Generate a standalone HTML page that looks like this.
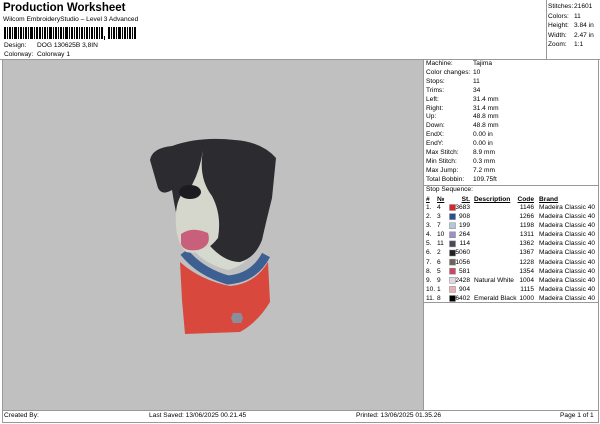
<!DOCTYPE html>
<html><head><meta charset="utf-8"><style>
*{margin:0;padding:0;box-sizing:border-box}
body{width:600px;height:424px;background:#fff;font-family:"Liberation Sans",sans-serif;color:#000;position:relative;overflow:hidden;font-size:6.6px}
.a{position:absolute;white-space:nowrap;line-height:8px}
.t .a{line-height:9.1px}
</style></head><body>
<div class="a" style="left:3px;top:2px;font-size:11.5px;font-weight:bold;line-height:13px">Production Worksheet</div>
<div class="a" style="left:3px;top:16px;font-size:6.6px">Wilcom EmbroideryStudio – Level 3 Advanced</div>
<svg class="a" style="left:4px;top:27px" width="140" height="14">
<g fill="#000">
<rect x="0" y="0" width="2" height="12"/><rect x="3" y="0" width="1" height="12"/><rect x="5" y="0" width="2" height="12"/><rect x="8" y="0" width="1" height="12"/><rect x="10" y="0" width="3" height="12"/><rect x="14" y="0" width="1" height="12"/><rect x="16" y="0" width="2" height="12"/><rect x="19" y="0" width="1" height="12"/><rect x="21" y="0" width="2" height="12"/><rect x="24" y="0" width="1" height="12"/><rect x="26" y="0" width="3" height="12"/><rect x="30" y="0" width="1" height="12"/><rect x="32" y="0" width="2" height="12"/><rect x="35" y="0" width="2" height="12"/><rect x="38" y="0" width="1" height="12"/><rect x="40" y="0" width="2" height="12"/><rect x="43" y="0" width="1" height="12"/><rect x="45" y="0" width="3" height="12"/><rect x="49" y="0" width="1" height="12"/><rect x="51" y="0" width="2" height="12"/><rect x="54" y="0" width="1" height="12"/><rect x="56" y="0" width="2" height="12"/><rect x="59" y="0" width="1" height="12"/><rect x="61" y="0" width="3" height="12"/><rect x="65" y="0" width="1" height="12"/><rect x="67" y="0" width="2" height="12"/><rect x="70" y="0" width="1" height="12"/><rect x="72" y="0" width="2" height="12"/><rect x="75" y="0" width="1" height="12"/><rect x="77" y="0" width="2" height="12"/><rect x="80" y="0" width="1" height="12"/><rect x="82" y="0" width="2" height="12"/><rect x="85" y="0" width="1" height="12"/><rect x="87" y="0" width="2" height="12"/><rect x="90" y="0" width="1" height="12"/><rect x="92" y="0" width="2" height="12"/><rect x="95" y="0" width="1" height="12"/><rect x="97" y="0" width="2" height="12"/><rect x="100" y="9" width="1" height="4"/>
<rect x="104" y="0" width="2" height="12"/><rect x="107" y="0" width="1" height="12"/><rect x="109" y="0" width="2" height="12"/><rect x="112" y="0" width="1" height="12"/><rect x="114" y="0" width="3" height="12"/><rect x="118" y="0" width="1" height="12"/><rect x="120" y="0" width="2" height="12"/><rect x="123" y="0" width="1" height="12"/><rect x="125" y="0" width="2" height="12"/><rect x="128" y="0" width="1" height="12"/><rect x="130" y="0" width="2" height="12"/>
</g></svg>
<div class="a" style="left:4px;top:42px">Design:</div><div class="a" style="left:37px;top:42px">DOG 130625B 3,8IN</div>
<div class="a" style="left:4px;top:51px">Colorway:</div><div class="a" style="left:37px;top:51px">Colorway 1</div>
<div class="a" style="left:0;top:59px;width:600px;height:1px;background:#999"></div>
<div class="a" style="left:546px;top:0;width:1px;height:59px;background:#999"></div>
<div class="a" style="left:548px;top:2px;line-height:9.5px">Stitches:<br>Colors:<br>Height:<br>Width:<br>Zoom:</div>
<div class="a" style="left:574px;top:2px;line-height:9.5px">21601<br>11<br>3.84 in<br>2.47 in<br>1:1</div>
<div class="a" style="left:2px;top:60px;width:422px;height:350px;background:#c0c0c0;border-left:1px solid #999;border-right:1px solid #999"></div>
<div class="a" style="left:598px;top:59px;width:1px;height:352px;background:#999"></div>
<div class="a" style="left:426px;top:60px;line-height:8.9px">Machine:<br>Color changes:<br>Stops:<br>Trims:<br>Left:<br>Right:<br>Up:<br>Down:<br>EndX:<br>EndY:<br>Max Stitch:<br>Min Stitch:<br>Max Jump:<br>Total Bobbin:</div>
<div class="a" style="left:473px;top:60px;line-height:8.9px">Tajima<br>10<br>11<br>34<br>31.4 mm<br>31.4 mm<br>48.8 mm<br>48.8 mm<br>0.00 in<br>0.00 in<br>8.9 mm<br>0.3 mm<br>7.2 mm<br>109.75ft</div>
<div class="a" style="left:424px;top:185px;width:175px;height:1px;background:#999"></div>
<div class="a" style="left:426px;top:186px">Stop Sequence:</div>
<div class="a" style="left:424px;top:302px;width:175px;height:1px;background:#999"></div>
<div class="t" style="position:absolute;left:0;top:195px">
<div class="a" style="left:426px;font-weight:bold;text-decoration:underline">#</div>
<div class="a" style="left:437px;font-weight:bold;text-decoration:underline">№</div>
<div class="a" style="left:440px;width:30px;text-align:right;font-weight:bold;text-decoration:underline">St.</div>
<div class="a" style="left:474px;font-weight:bold;text-decoration:underline">Description</div>
<div class="a" style="left:500px;width:34px;text-align:right;font-weight:bold;text-decoration:underline">Code</div>
<div class="a" style="left:539px;font-weight:bold;text-decoration:underline">Brand</div>
</div>
<div class="t" style="position:absolute;left:0;top:203px">
<div class="a" style="left:426px">1.<br>2.<br>3.<br>4.<br>5.<br>6.<br>7.<br>8.<br>9.<br>10.<br>11.</div>
<div class="a" style="left:437px">4<br>3<br>7<br>10<br>11<br>2<br>6<br>5<br>9<br>1<br>8</div>
<div class="a" style="left:440px;width:30px;text-align:right">3683<br>908<br>199<br>264<br>114<br>5060<br>1056<br>581<br>2428<br>904<br>6402</div>
<div class="a" style="left:474px"><br><br><br><br><br><br><br><br>Natural White<br><br>Emerald Black</div>
<div class="a" style="left:500px;width:34px;text-align:right">1146<br>1266<br>1198<br>1311<br>1362<br>1367<br>1228<br>1354<br>1004<br>1115<br>1000</div>
<div class="a" style="left:539px">Madeira Classic 40<br>Madeira Classic 40<br>Madeira Classic 40<br>Madeira Classic 40<br>Madeira Classic 40<br>Madeira Classic 40<br>Madeira Classic 40<br>Madeira Classic 40<br>Madeira Classic 40<br>Madeira Classic 40<br>Madeira Classic 40</div>
</div>
<svg class="a" style="left:449px;top:204px" width="8" height="100">
<g stroke="#888" stroke-width="0.5">
<rect x="0.5" y="0.5" width="6" height="6" fill="#d8262b"/>
<rect x="0.5" y="9.6" width="6" height="6" fill="#2c4f92"/>
<rect x="0.5" y="18.7" width="6" height="6" fill="#b4c6d8"/>
<rect x="0.5" y="27.8" width="6" height="6" fill="#9d90c8"/>
<rect x="0.5" y="36.9" width="6" height="6" fill="#4a4858"/>
<rect x="0.5" y="46" width="6" height="6" fill="#222226"/>
<rect x="0.5" y="55.1" width="6" height="6" fill="#6e625c"/>
<rect x="0.5" y="64.2" width="6" height="6" fill="#c84864"/>
<rect x="0.5" y="73.3" width="6" height="6" fill="#dcdcde"/>
<rect x="0.5" y="82.4" width="6" height="6" fill="#e8b0b8"/>
<rect x="0.5" y="91.5" width="6" height="6" fill="#000"/>
</g></svg>
<svg class="a" style="left:0;top:0" width="424" height="410">
<path d="M180 262 Q200 280 230 286 Q255 284 268 262 L270 302 Q258 322 240 332 L185 334 L182 300 Z" fill="#d9483c"/>
<path d="M184 252 Q200 272 228 280 Q254 278 266 255" fill="none" stroke="#3e5f92" stroke-width="9"/>
<path d="M182 232 Q195 262 228 270 Q250 264 255 246 L236 234 Z" fill="#d6d9d0"/>
<path d="M150 160 Q152 148 172 146 Q200 136 235 140 Q262 142 276 158 L272 198 Q266 222 262 240 Q255 258 240 262 Q222 262 205 240 L180 230 Q175 210 172 190 Q162 196 158 188 Z" fill="#2b2b30"/>
<path d="M203 150 Q198 178 212 196 Q222 215 218 238 Q204 256 186 252 Q174 240 176 212 Q178 192 192 185 Q200 170 203 150 Z" fill="#d5d7cc"/>
<ellipse cx="190" cy="192" rx="11" ry="7" fill="#1c1c20"/>
<path d="M181 234 Q192 226 208 233 Q212 246 198 250 Q184 252 181 244 Z" fill="#c8607c"/>
<path d="M233 313 h8 l2 5 l-2 5 h-8 l-2 -5 Z" fill="#8a8e9c"/>
</svg>
<div class="a" style="left:2px;top:410px;width:597px;height:13px;border:1px solid #999"></div>
<div class="a" style="left:4px;top:412px">Created By:</div>
<div class="a" style="left:149px;top:412px">Last Saved: 13/06/2025 00.21.45</div>
<div class="a" style="left:356px;top:412px">Printed: 13/06/2025 01.35.26</div>
<div class="a" style="left:560px;top:412px">Page 1 of 1</div>
</body></html>
